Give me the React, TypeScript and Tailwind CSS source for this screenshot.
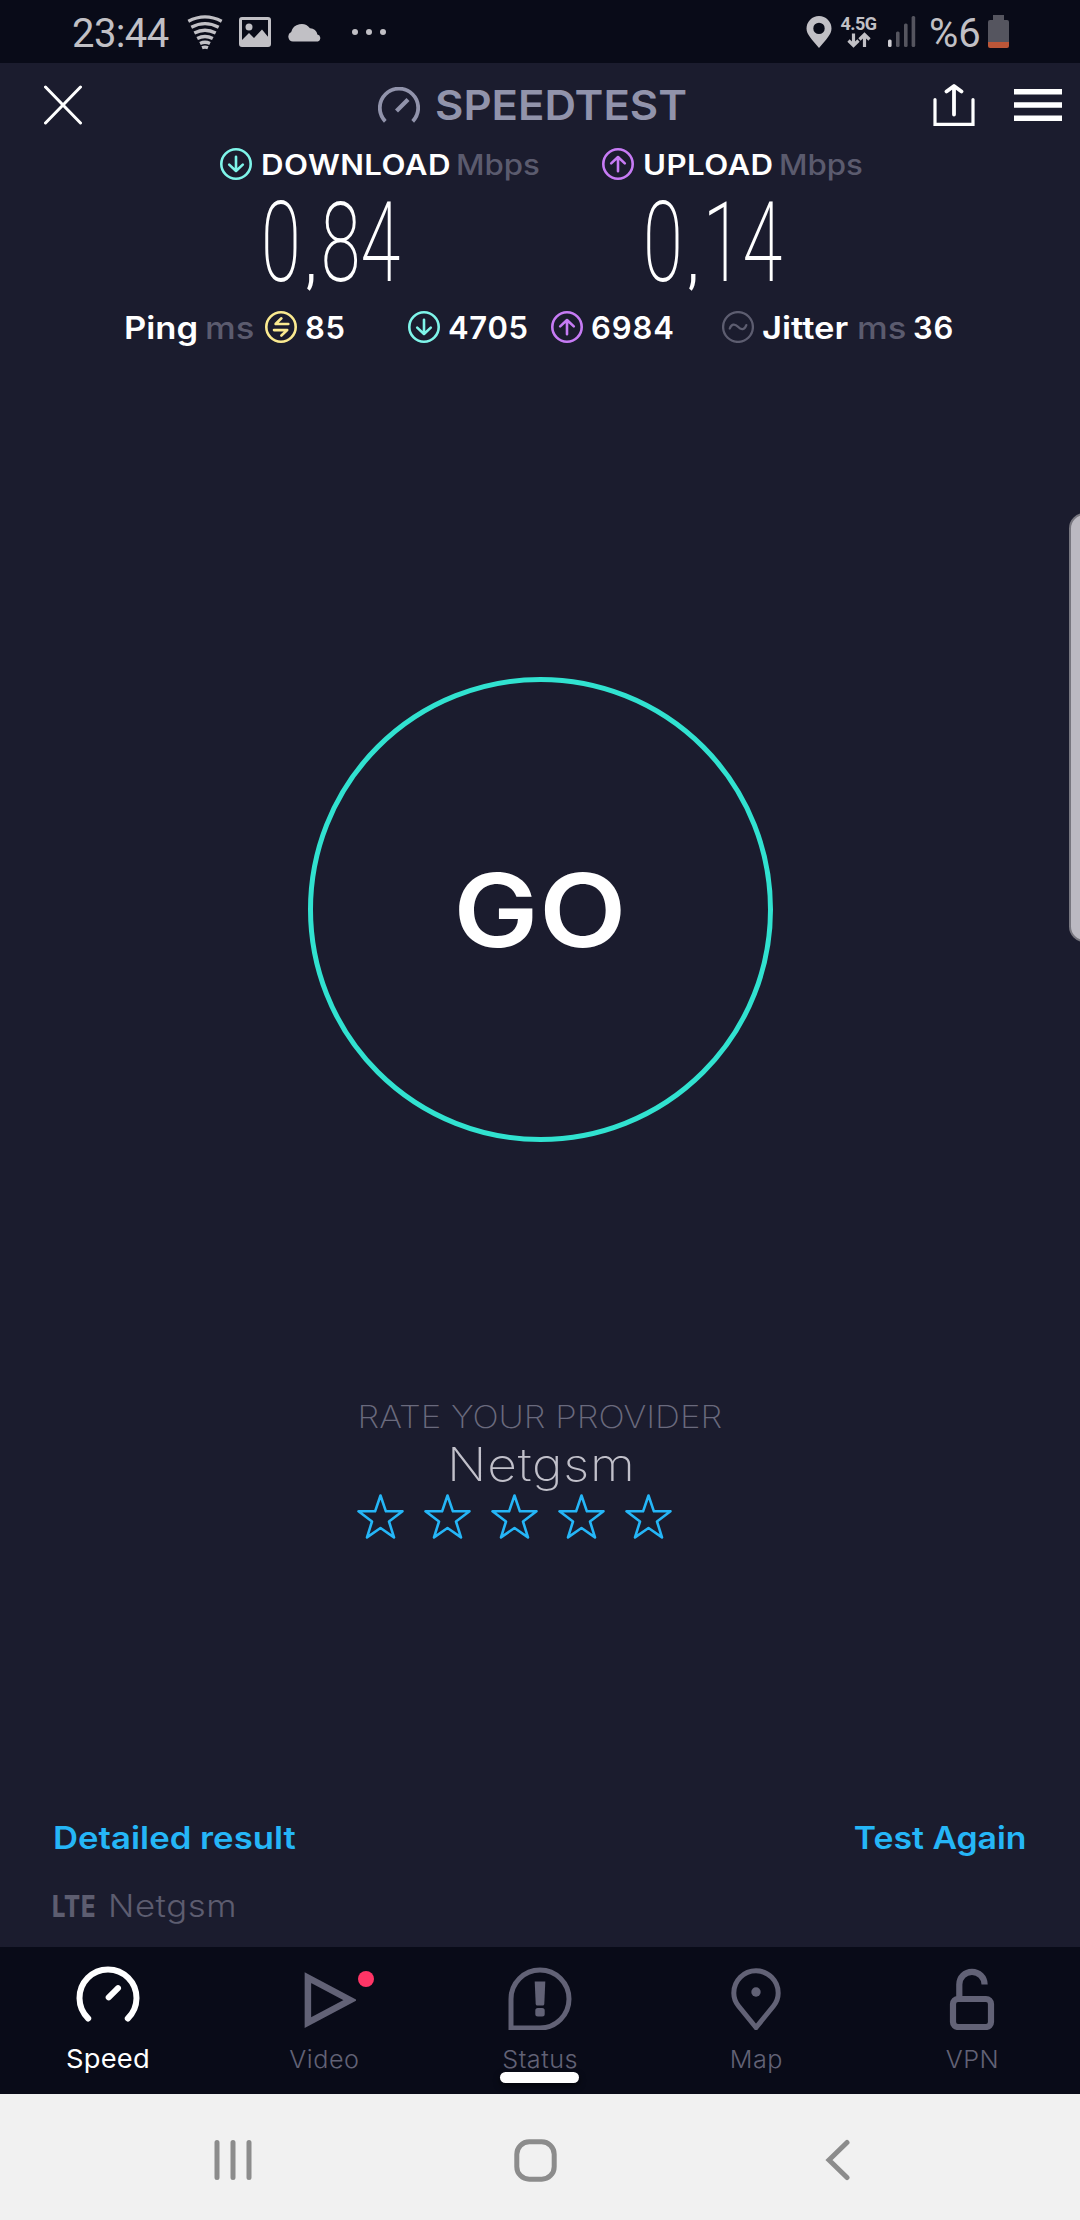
import React from 'react';

const inter = "font-['Inter','Liberation_Sans',sans-serif]";
const roboto = "font-['Roboto','Liberation_Sans',sans-serif]";

type IconProps = { className?: string };

const ArrowCircle: React.FC<IconProps & { up?: boolean }> = ({ className = '', up }) => (
  <svg viewBox="0 0 32 32" className={`size-8 shrink-0 ${className}`} fill="none" stroke="currentColor" strokeWidth="2.6">
    <circle cx="16" cy="16" r="14.7" />
    <path
      d={up ? 'M16 23.2V9.4M9.2 15.4 16 9l6.8 6.4' : 'M16 8.8v13.8M9.2 16.6 16 23l6.8-6.4'}
      strokeLinecap="round"
      strokeLinejoin="round"
    />
  </svg>
);

const PingIcon = () => (
  <svg viewBox="0 0 32 32" className="size-8 shrink-0 text-[#fbea90]" fill="none" stroke="currentColor" strokeWidth="2.6">
    <circle cx="16" cy="16" r="14.7" />
    <path d="M16.4 7.3 10.6 13h12.7M9 19.1h13.2l-5.8 5.4" strokeLinecap="round" strokeLinejoin="round" />
  </svg>
);

const JitterIcon = () => (
  <svg viewBox="0 0 32 32" className="size-8 shrink-0 text-[#5d5d70]" fill="none" stroke="currentColor" strokeWidth="2.3">
    <circle cx="16" cy="16" r="14.9" />
    <path d="M7.8 17.5c1.5-4.6 5-5.2 8.2-1.700s6.700 3 8.300-1.700" strokeLinecap="round" />
  </svg>
);

// Text stretched a little from its left edge
const Wide: React.FC<{ children: React.ReactNode }> = ({ children }) => (
  <span className="inline-block origin-left scale-x-[1.115]">{children}</span>
);

const StatusBar = () => (
  <div className={`flex h-[63px] items-center bg-[#090b18] text-[#c1c0c5] ${roboto}`}>
    <span className="ml-[72px] w-[115px] pt-1 text-[40px] leading-none tracking-[-0.6px]">23:44</span>
    <svg viewBox="0 0 36 36" className="h-9 w-9" fill="none" stroke="currentColor" strokeWidth="3.3">
      <path d="M1.300 7.300Q18-1.400 34.700 7.300M4.300 13.200Q18 6 31.700 13.200M7.300 19Q18 13.500 28.700 19M10.200 24.500Q18 20.500 25.800 24.500M13 29.500Q18 27 23 29.500M15 33.700Q18 32.500 21 33.700" />
    </svg>
    <svg viewBox="0 0 32 30" className="ml-4 h-[30px] w-8">
      <rect x="1.5" y="1.5" width="29" height="27" rx="1.5" fill="none" stroke="currentColor" strokeWidth="3" />
      <circle cx="10" cy="10" r="3.5" fill="currentColor" />
      <path d="M2 24l8-8 5 5 8-8.500 7 8.500v7H2z" fill="currentColor" />
    </svg>
    <svg viewBox="0 0 34 20" className="ml-[17px] h-5 w-[34px]" fill="currentColor">
      <path d="M5 19.500A5 5 0 0 1 3.200 10 10.600 10.600 0 0 1 22 6.300a7.200 7.200 0 0 1 7.400 6.300 3.600 3.600 0 0 1 .6 6.900z" />
    </svg>
    <div className="ml-[30px] flex gap-2">
      <i className="size-1.5 rounded-full bg-current" />
      <i className="size-1.5 rounded-full bg-current" />
      <i className="size-1.5 rounded-full bg-current" />
    </div>
    <div className="ml-auto flex items-center">
      <svg viewBox="0 0 26 32" className="h-8 w-[26px]" fill="currentColor" fillRule="evenodd">
        <path d="M13 0a12.500 12.500 0 0 0-12.500 12.500C.5 18.500 6 23.500 13 32c7-8.500 12.500-13.500 12.500-19.500A12.500 12.500 0 0 0 13 0zm0 6.700a5.700 5.700 0 1 1 0 11.400 5.700 5.700 0 0 1 0-11.400z" />
      </svg>
      <div className="ml-[9px] flex w-[35px] flex-col items-center">
        <span className="text-[18px] leading-4 font-bold tracking-[-0.5px]">4.5G</span>
        <svg viewBox="0 0 24 16" className="h-4 w-6" fill="none" stroke="currentColor" strokeWidth="3.2">
          <path d="M6.500 1.500v12M1.500 8.500l5 5 5-5M17.500 15V3M12.500 7.500l5-5 5 5" />
        </svg>
      </div>
      <svg viewBox="0 0 28 31" className="ml-3 h-[31px] w-7" fill="#55555f">
        <rect x="0" y="23.500" width="3.600" height="7.500" rx="1.500" fill="#d0cfd4" />
        <rect x="8" y="15.500" width="3.600" height="15.500" rx="1.500" />
        <rect x="16" y="7.500" width="3.600" height="23.500" rx="1.500" />
        <rect x="23.600" y="0" width="3.600" height="31" rx="1.500" />
      </svg>
      <span className="ml-[13px] w-[59px] pt-1 text-[40px] leading-none">%6</span>
      <svg viewBox="0 0 21 33" className="mr-[71px] h-[33px] w-[21px]">
        <path d="M5 0h11v5h3a2 2 0 0 1 2 2v20H0V7a2 2 0 0 1 2-2h3z" fill="#55555f" />
        <path d="M0 27h21v4a2 2 0 0 1-2 2H2a2 2 0 0 1-2-2z" fill="#bb5638" />
      </svg>
    </div>
  </div>
);

const Header = () => (
  <header className="flex h-[84px] items-center">
    <svg viewBox="0 0 38 40" className="ml-11 h-10 w-[38px] text-white" stroke="currentColor" strokeWidth="3" strokeLinecap="round">
      <path d="M1.500 2l35 36M36.500 2l-35 36" />
    </svg>
    <svg viewBox="0 0 42 37" className="ml-[296px] h-[37px] w-[42px] text-[#9193ab]" fill="none" stroke="currentColor">
      <path d="M7.300 34.300a19.200 19.200 0 1 1 27.400 0" strokeWidth="3.800" />
      <path d="M18.500 24 30 12.500" strokeWidth="4.200" />
    </svg>
    <span className="ml-[15px] w-[260px] text-[41px] leading-none font-semibold text-[#9193ab]">
      <span className="inline-block origin-left scale-x-[1.065]">SPEEDTEST</span>
    </span>
    <div className="ml-auto flex items-center gap-[39px] pr-[18px] text-white">
      <svg viewBox="0 0 42 42" className="h-[42px] w-[42px]" fill="none" stroke="currentColor" strokeWidth="3.4" strokeLinecap="round" strokeLinejoin="round">
        <path d="M2 15.500V40.300h38V15.500" strokeLinejoin="miter" strokeWidth="3.200" />
        <path d="M21 30.500V2.500M13.500 7.500 21 2l7.500 5.500" strokeWidth="3.800" />
      </svg>
      <svg viewBox="0 0 48 32" className="h-8 w-12" fill="currentColor">
        <path d="M0 0h48v5.600H0zM0 13.200h48v5.600H0zM0 26.400h48V32H0z" />
      </svg>
    </div>
  </header>
);

const Speed: React.FC<{ whole: string; fraction: string }> = ({ whole, fraction }) => (
  <span className="inline-block origin-left scale-x-[0.650]">
    {whole}
    <span className="pr-[8px] pl-[9px] text-[62px] font-medium">,</span>
    {fraction}
  </span>
);

const Results = () => (
  <section className="text-white">
    <div className="flex h-[33px] items-center pl-[220px] text-[28px] leading-none font-semibold">
      <ArrowCircle className="text-[#7ff5ea]" />
      <span className="ml-[9px] w-[195px] pt-[3px] tracking-[0.4px]"><Wide>DOWNLOAD</Wide></span>
      <span className="w-[146px] pt-[3px] font-medium text-[#5b5b6e]"><Wide>Mbps</Wide></span>
      <ArrowCircle up className="text-[#c77bf5]" />
      <span className="ml-[9px] w-[136px] pt-[3px] tracking-[0.4px]"><Wide>UPLOAD</Wide></span>
      <span className="pt-[3px] font-medium text-[#5b5b6e]"><Wide>Mbps</Wide></span>
    </div>
    <div className={`flex h-[122px] items-center pt-1 pl-[261px] text-[111px] leading-none font-extralight ${roboto}`}>
      <span className="w-[382px]"><Speed whole="0" fraction="84" /></span>
      <Speed whole="0" fraction="14" />
    </div>
    <div className="flex h-[50px] items-center pl-[124px] text-[31px] leading-none font-semibold">
      <span className="w-[81px]"><Wide>Ping</Wide></span>
      <span className="w-[60px] font-medium text-[#5b5b6e]"><Wide>ms</Wide></span>
      <PingIcon />
      <span className="ml-2 w-[103px] tracking-[0.7px]">85</span>
      <ArrowCircle className="text-[#7ff5ea]" />
      <span className="ml-2 w-[103px] tracking-[0.7px]">4705</span>
      <ArrowCircle up className="text-[#c77bf5]" />
      <span className="ml-2 w-[131px] tracking-[0.9px]">6984</span>
      <JitterIcon />
      <span className="ml-2 w-[95px]"><Wide>Jitter</Wide></span>
      <span className="w-[56px] font-medium text-[#5b5b6e]"><Wide>ms</Wide></span>
      <span className="tracking-[0.7px]">36</span>
    </div>
  </section>
);

const Star = () => (
  <svg viewBox="0 0 47 45" className="h-[45px] w-[47px]" fill="none" stroke="#25b6f7" strokeWidth="2.6" strokeLinejoin="round">
    <path d="M23.500 1.500l5.400 15.800H45.500L32 27.500l5 15.900-13.500-9.400-13.500 9.400 5-15.900L1.500 17.300h16.600z" />
  </svg>
);

const Provider = () => (
  <section className="mt-[255px] flex flex-col items-center">
    <p className="h-10 scale-x-[1.120] text-[31px] leading-10 font-extralight text-[#6a6a7d]">RATE YOUR PROVIDER</p>
    <p className="h-14 scale-x-[1.120] pl-[2px] text-[46px] leading-[55px] font-extralight tracking-[0.7px] text-[#c1c0ca]">Netgsm</p>
    <div className="mt-px mr-[51px] flex gap-5">
      {[1, 2, 3, 4, 5].map((n) => (
        <Star key={n} />
      ))}
    </div>
  </section>
);

const tabs = [
  {
    label: 'Speed',
    icon: (
      <svg viewBox="0 0 64 64" className="size-16" fill="none" stroke="currentColor" strokeWidth="6" strokeLinecap="round">
        <path d="M12.200 52.500A28.500 28.500 0 1 1 51.800 52.500" />
        <path d="M32.700 31.300 42 22.200" />
      </svg>
    ),
  },
  {
    label: 'Video',
    icon: (
      <svg viewBox="0 0 64 64" className="size-16" fill="none" stroke="currentColor" strokeWidth="6.5">
        <path d="M15.600 10.600v45L58 33.100z" transform="translate(0.300 1)" />
      </svg>
    ),
  },
  {
    label: 'Status',
    icon: (
      <svg viewBox="0 0 64 64" className="size-16">
        <path d="M3 61V32a29 29 0 1 1 29 29z" fill="none" stroke="currentColor" strokeWidth="5" transform="translate(0 1)" />
        <path d="M26.700 15.500h10.600l-1 22.500q-.2 1.500-1.500 1.500h-5.600q-1.300 0-1.500-1.500z" fill="currentColor" />
        <rect x="27.300" y="42" width="9.400" height="8.500" rx="2.500" fill="currentColor" />
      </svg>
    ),
  },
  {
    label: 'Map',
    icon: (
      <svg viewBox="0 0 64 64" className="size-16" fill="none" stroke="currentColor" strokeWidth="5">
        <path d="M32 61.500 14.500 40C10.500 35 9.800 31 9.800 27a22.200 22.200 0 1 1 44.400 0c0 4-.7 8-4.700 13z" />
        <circle cx="32" cy="26" r="4.700" fill="currentColor" stroke="none" />
      </svg>
    ),
  },
  {
    label: 'VPN',
    icon: (
      <svg viewBox="0 0 64 64" className="size-16" fill="none" stroke="currentColor" strokeWidth="6.2">
        <rect x="13" y="33" width="38" height="28" rx="5" />
        <path d="M19.300 33V18.500a12.600 12.600 0 0 1 25.300 0" />
      </svg>
    ),
  },
];

const TabBar = () => (
  <nav className="grid h-[147px] grid-cols-5 bg-[#090b18]">
    {tabs.map((tab, index) => (
      <div
        key={tab.label}
        className={`relative flex flex-col items-center pt-[19px] ${index === 0 ? 'text-white' : 'text-[#626276]'}`}
      >
        {tab.icon}
        <span
          className={
            index === 0
              ? 'mt-[13px] scale-x-[1.050] text-[26px] leading-8 font-normal tracking-[0.2px]'
              : 'mt-[14px] scale-x-[1.050] text-[24px] leading-8 font-light tracking-[0.5px]'
          }
        >
          {tab.label}
        </span>
        {tab.label === 'Video' && <i className="absolute top-6 left-[142px] size-4 rounded-full bg-[#ff3566]" />}
        {tab.label === 'Status' && (
          <i className="absolute top-[125px] left-[68px] h-[11px] w-[79px] rounded-full bg-white shadow-[0_3px_6px_rgba(0,0,0,0.6)]" />
        )}
      </div>
    ))}
  </nav>
);

const SystemBar = () => (
  <div className="flex h-[126px] items-center justify-between bg-[#f1f1f1] pt-1.5 pr-[229px] pl-[213px] text-[#8c8c8c]">
    <svg viewBox="0 0 40 42" className="h-[42px] w-10" stroke="currentColor" strokeWidth="5" strokeLinecap="round">
      <path d="M4 3.500v35M20 3.500v35M36 3.500v35" />
    </svg>
    <svg viewBox="0 0 43 43" className="mr-2 size-[43px]" fill="none" stroke="currentColor" strokeWidth="5">
      <rect x="2.800" y="2.800" width="37.400" height="37.400" rx="12.500" />
    </svg>
    <svg viewBox="0 0 26 42" className="h-[42px] w-[26px]" fill="none" stroke="currentColor" strokeWidth="5" strokeLinecap="round">
      <path d="M22 3.500 4 21l18 17.500" />
    </svg>
  </div>
);

export default function App() {
  return (
    <div className={`relative flex h-[2220px] w-[1080px] flex-col overflow-hidden bg-[#1b1c2e] ${inter}`}>
      <StatusBar />
      <Header />
      <Results />

      <div className="mt-[325px] flex justify-center">
        <button className="flex size-[465px] items-center justify-center rounded-full border-[5px] border-[#31e2d0]">
          <span className="scale-x-[1.110] text-[102px] leading-none font-semibold tracking-[1px] text-white">GO</span>
        </button>
      </div>

      <Provider />

      <div className="mt-auto flex items-center justify-between px-[53px] text-[31px] leading-10 font-semibold text-[#25b6f7]">
        <span className="origin-left scale-x-[1.120]">Detailed result</span>
        <span className="origin-right scale-x-[1.090]">Test Again</span>
      </div>
      <div className="mt-7 mb-[21px] flex h-10 items-center pl-[52px] text-[#5d5d70]">
        <span className="w-[56px]">
          <span className="inline-block origin-left scale-x-[0.790] text-[30px] leading-10 font-extrabold tracking-[1px]">LTE</span>
        </span>
        <span className="origin-left scale-x-[1.120] text-[31px] leading-10 font-light tracking-[0.5px]">Netgsm</span>
      </div>

      <TabBar />
      <SystemBar />

      {/* Edge panel handle */}
      <div className="absolute top-[513px] right-[-20px] h-[429px] w-[31px] rounded-2xl border-2 border-[#77767f] bg-[#bbb9c2]" />
    </div>
  );
}
